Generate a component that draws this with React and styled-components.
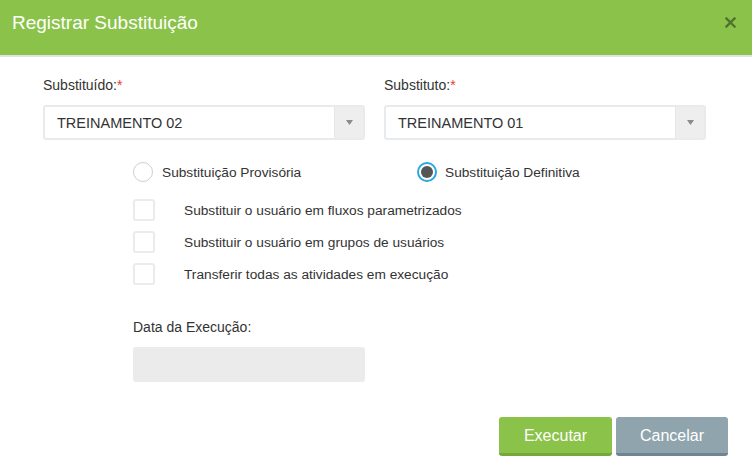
import React, { useState } from "react";
import styled, { createGlobalStyle } from "styled-components";

const GlobalStyle = createGlobalStyle`
  html, body {
    margin: 0;
    padding: 0;
    background: #ffffff;
    font-family: "Liberation Sans", Arial, sans-serif;
    color: #333333;
  }
`;

const Modal = styled.div`
  width: 752px;
  height: 468px;
  background: #ffffff;
  box-sizing: border-box;
`;

const Header = styled.div`
  height: 43px;
  background: #8bc34a;
  border-bottom: 2px solid #dfe3e6;
  display: flex;
  justify-content: space-between;
  align-items: flex-start;
  padding: 12px 16px 0 12px;
`;

const Title = styled.h1`
  margin: 0;
  font-size: 19px;
  line-height: 22px;
  font-weight: normal;
  color: #ffffff;
`;

const CloseBtn = styled.button`
  border: none;
  background: transparent;
  padding: 0;
  margin-top: 5px;
  width: 11px;
  height: 11px;
  cursor: pointer;
  display: flex;
`;

const Body = styled.div`
  padding: 18px 46px 0 43px;
`;

const FieldGrid = styled.div`
  display: grid;
  grid-template-columns: 322px 322px;
  column-gap: 19px;
`;

const Field = styled.div`
  display: flex;
  flex-direction: column;
`;

const Label = styled.label`
  font-size: 14px;
  line-height: 20px;
  color: #333333;
  margin-bottom: 10px;
`;

const Req = styled.span`
  color: #e53935;
`;

const Select = styled.div`
  height: 35px;
  box-sizing: border-box;
  border: 2px solid #e8ebed;
  border-radius: 3px;
  display: flex;
  align-items: stretch;
  background: #ffffff;
`;

const SelectValue = styled.div`
  flex: 1;
  padding-left: 12px;
  display: flex;
  align-items: center;
  font-size: 14.5px;
  color: #333333;
`;

const SelectArrow = styled.div`
  width: 28px;
  background: #eeeeee;
  display: flex;
  align-items: center;
  justify-content: center;
  border-left: 1px solid #e4e6e8;
`;

const Options = styled.div`
  padding-left: 90px;
`;

const RadioRow = styled.div`
  display: flex;
  margin-top: 22px;
  height: 20px;
`;

const RadioItem = styled.label`
  display: flex;
  align-items: center;
  width: ${(p) => p.width}px;
  font-size: 13.7px;
  color: #333333;
  cursor: pointer;
`;

const RadioCircle = styled.span`
  width: 20px;
  height: 20px;
  box-sizing: border-box;
  border-radius: 50%;
  border: ${(p) => (p.checked ? "2px solid #29a8e0" : "1.5px solid #cfcfcf")};
  margin-right: ${(p) => p.gap}px;
  display: flex;
  align-items: center;
  justify-content: center;
  background: #ffffff;

  &::after {
    content: "";
    display: ${(p) => (p.checked ? "block" : "none")};
    width: 12px;
    height: 12px;
    border-radius: 50%;
    background: #555555;
  }
`;

const CheckList = styled.div`
  display: flex;
  flex-direction: column;
  gap: 10px;
  margin-top: 17px;
`;

const CheckItem = styled.label`
  display: flex;
  align-items: center;
  font-size: 13.7px;
  color: #333333;
  cursor: pointer;
`;

const CheckBox = styled.span`
  width: 22px;
  height: 22px;
  box-sizing: border-box;
  border: 2px solid #e8ecef;
  border-radius: 3px;
  margin-right: 29px;
`;

const DateField = styled.div`
  display: flex;
  flex-direction: column;
  margin-top: 32px;
  width: 232px;
`;

const DateInput = styled.div`
  height: 35px;
  background: #ebebeb;
  border-radius: 3px;
`;

const Footer = styled.div`
  display: flex;
  justify-content: flex-end;
  gap: 4px;
  padding: 35px 24px 0 0;
`;

const Button = styled.button`
  width: ${(p) => p.width}px;
  height: 39px;
  border: none;
  border-bottom: 3px solid ${(p) => p.shade};
  border-radius: 3px;
  background: ${(p) => p.color};
  color: #ffffff;
  font-family: "Liberation Sans", Arial, sans-serif;
  font-size: 16px;
  padding: 2px 0 0;
  cursor: pointer;
`;

const Arrow = () => (
  <svg width="7" height="5" viewBox="0 0 7 5">
    <path d="M0 0 H7 L3.5 5 Z" fill="#8a8a8a" />
  </svg>
);

const App = () => {
  const [tipo, setTipo] = useState("definitiva");

  return (
    <>
      <GlobalStyle />
      <Modal>
        <Header>
          <Title>Registrar Substituição</Title>
          <CloseBtn aria-label="Fechar">
            <svg width="11" height="11" viewBox="0 0 11 11">
              <path
                d="M1.5 1.5 L9.5 9.5 M9.5 1.5 L1.5 9.5"
                stroke="#4f7330"
                strokeWidth="2.4"
                strokeLinecap="square"
              />
            </svg>
          </CloseBtn>
        </Header>
        <Body>
          <FieldGrid>
            <Field>
              <Label>
                Substituído:<Req>*</Req>
              </Label>
              <Select>
                <SelectValue>TREINAMENTO 02</SelectValue>
                <SelectArrow>
                  <Arrow />
                </SelectArrow>
              </Select>
            </Field>
            <Field>
              <Label>
                Substituto:<Req>*</Req>
              </Label>
              <Select>
                <SelectValue>TREINAMENTO 01</SelectValue>
                <SelectArrow>
                  <Arrow />
                </SelectArrow>
              </Select>
            </Field>
          </FieldGrid>
          <Options>
            <RadioRow>
              <RadioItem width={284} onClick={() => setTipo("provisoria")}>
                <RadioCircle gap={9} checked={tipo === "provisoria"} />
                Substituição Provisória
              </RadioItem>
              <RadioItem width={200} onClick={() => setTipo("definitiva")}>
                <RadioCircle gap={8} checked={tipo === "definitiva"} />
                Substituição Definitiva
              </RadioItem>
            </RadioRow>
            <CheckList>
              <CheckItem>
                <CheckBox />
                Substituir o usuário em fluxos parametrizados
              </CheckItem>
              <CheckItem>
                <CheckBox />
                Substituir o usuário em grupos de usuários
              </CheckItem>
              <CheckItem>
                <CheckBox />
                Transferir todas as atividades em execução
              </CheckItem>
            </CheckList>
            <DateField>
              <Label>Data da Execução:</Label>
              <DateInput />
            </DateField>
          </Options>
        </Body>
        <Footer>
          <Button width={113} color="#8bc34a" shade="#74a83a">
            Executar
          </Button>
          <Button width={112} color="#90a4ae" shade="#6f858f">
            Cancelar
          </Button>
        </Footer>
      </Modal>
    </>
  );
};

export default App;
